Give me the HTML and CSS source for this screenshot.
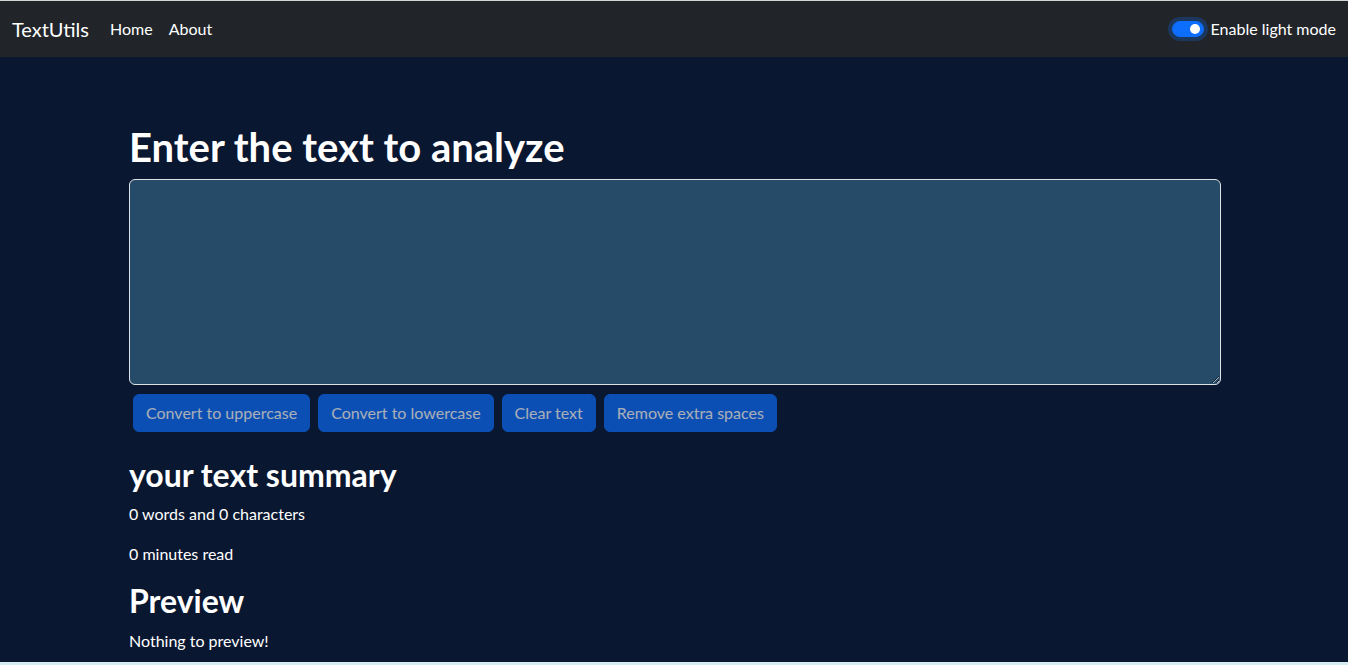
FILE: index.html
```html
<!DOCTYPE html>
<html lang="en">
<head>
	<meta charset="UTF-8">
	<meta name="viewport" content="width=device-width, initial-scale=1.0">
	<title>TextUtils</title>
	<link rel="stylesheet" href="styles.css">
</head>
<body>

	<div class="page">
		<nav class="navbar">
			<div class="navbar__left">
				<a class="navbar__brand" href="#">TextUtils</a>
				<ul class="navbar__nav">
					<li><a class="navbar__link" href="#">Home</a></li>
					<li><a class="navbar__link" href="#">About</a></li>
				</ul>
			</div>
			<div class="switch">
				<input class="switch__input" type="checkbox" id="modeSwitch" checked>
				<label class="switch__label" for="modeSwitch">Enable light mode</label>
			</div>
		</nav>

		<div class="container">
			<h1 class="title">Enter the text to analyze</h1>
			<textarea class="textbox" id="myBox" rows="8"></textarea>
			<div class="actions">
				<button class="btn" disabled>Convert to uppercase</button>
				<button class="btn" disabled>Convert to lowercase</button>
				<button class="btn" disabled>Clear text</button>
				<button class="btn" disabled>Remove extra spaces</button>
			</div>

			<div class="summary">
				<h2>your text summary</h2>
				<p>0 words and 0 characters</p>
				<p>0 minutes read</p>
				<h2>Preview</h2>
				<p>Nothing to preview!</p>
			</div>
		</div>
	</div>

</body>
</html>
```

FILE: styles.css
```css
* {
    margin: 0;
    padding: 0;
    box-sizing: border-box;
}

html {
    background: #d6ecf3;
}

body {
    font-family: 'Lato', sans-serif;
    font-size: 16px;
    line-height: 1.5;
    color: #fff;
}

.page {
    height: calc(100vh - 3px);
    overflow: hidden;
    background-color: #0a1730;
    border-top: 1px solid #d4d4d4;
}

a {
    color: inherit;
    text-decoration: none;
}

/* navbar */
.navbar {
    display: flex;
    justify-content: space-between;
    align-items: center;
    height: 56px;
    padding: 0 12px;
    background-color: #212529;
}

.navbar__left {
    display: flex;
    align-items: center;
}

.navbar__brand {
    font-size: 20px;
    line-height: 30px;
    margin-right: 13px;
}

.navbar__nav {
    display: flex;
    list-style: none;
}

.navbar__link {
    display: block;
    padding: 8px;
}

.switch {
    display: flex;
    align-items: center;
    gap: 7px;
}

.switch__input {
    appearance: none;
    width: 32px;
    height: 16px;
    border-radius: 16px;
    background-color: #0d6efd;
    border: 1px solid #0d6efd;
    box-shadow: 0 0 0 4px rgba(13, 110, 253, 0.25);
    position: relative;
}

.switch__input::after {
    content: "";
    position: absolute;
    top: 2px;
    right: 3px;
    width: 10px;
    height: 10px;
    border-radius: 50%;
    background: #fff;
}

/* main */
.container {
    max-width: 1094px;
    margin: 0 auto;
    padding: 66px 0 0 2px;
}

.title {
    font-size: 40px;
    font-weight: 700;
    line-height: 1.2;
    margin-bottom: 8px;
}

.textbox {
    display: block;
    width: 100%;
    padding: 6px 12px;
    font: inherit;
    line-height: 24px;
    color: #fff;
    background-color: #264b69;
    border: 1px solid #dee2e6;
    border-radius: 6px;
    resize: vertical;
}

.actions {
    display: flex;
    gap: 8px;
    margin: 9px 4px 0;
}

.btn {
    padding: 6px 12px;
    font: inherit;
    line-height: 24px;
    color: #fff;
    background-color: #0d6efd;
    border: 1px solid #0d6efd;
    border-radius: 6px;
}

.btn:disabled {
    opacity: 0.65;
}

.summary {
    margin-top: 24px;
}

.summary h2 {
    font-size: 32px;
    font-weight: 700;
    line-height: 1.2;
    margin-bottom: 8px;
}

.summary p {
    margin-bottom: 16px;
}
```
